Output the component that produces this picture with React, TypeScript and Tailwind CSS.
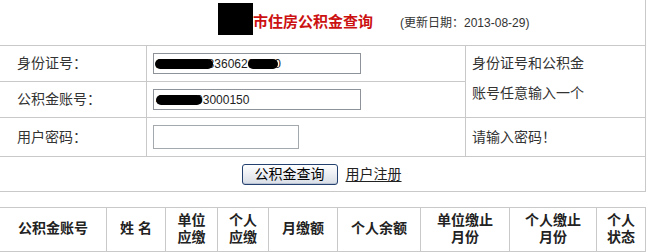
import React from "react";

const B = "border-[#c9c9c9]";

function Blob({ className }: { className: string }) {
  return <span className={`absolute bg-black rounded-full ${className}`} />;
}

export default function App() {
  const headers: { w: string; lines: string[] }[] = [
    { w: "w-[107px]", lines: ["公积金账号"] },
    { w: "w-[59px]", lines: ["姓\u00a0名"] },
    { w: "w-[52px]", lines: ["单位", "应缴"] },
    { w: "w-[51px]", lines: ["个人", "应缴"] },
    { w: "w-[69px]", lines: ["月缴额"] },
    { w: "w-[83px]", lines: ["个人余额"] },
    { w: "w-[89px]", lines: ["单位缴止", "月份"] },
    { w: "w-[87px]", lines: ["个人缴止", "月份"] },
    { w: "w-[49px]", lines: ["个人", "状态"] },
  ];
  return (
    <div className="w-[649px] h-[252px] overflow-hidden bg-white text-[#333] font-['Liberation_Sans','Noto_Sans_CJK_SC',sans-serif]">
      <div className={`w-[646px] border-r ${B}`}>
        <div className={`h-[46px] border-b ${B} flex items-start pl-[218px] pt-[3px]`}>
          <div className="w-[35px] h-[32px] bg-black" />
          <span className="mt-[9px] text-[15px] leading-[20px] font-bold text-[#cc1111]">市住房公积金查询</span>
          <span className="ml-[27px] mt-[11px] text-[12px] leading-[18px] text-[#333]">(更新日期：2013-08-29)</span>
        </div>
        <div className="grid grid-cols-[147px_319px_179px]">
          <div className={`h-[36px] border-b border-r ${B} flex items-center pl-[17px] text-[14px]`}>身份证号：</div>
          <div className={`h-[36px] border-b border-r ${B} flex items-center pl-[6px]`}>
            <div className="relative w-[208px] h-[21px] border border-[#8d9399] flex items-center pl-[2px] text-[12px] text-[#222] overflow-hidden whitespace-nowrap">
              1101011983606200010
              <Blob className="left-[1px] top-[5px] w-[58px] h-[10px]" />
              <Blob className="left-[94px] top-[5px] w-[30px] h-[10px]" />
            </div>
          </div>
          <div className={`row-span-2 border-b ${B} pl-[6px] pt-[2px] text-[14px] leading-[30px]`}>
            <div>身份证号和公积金</div>
            <div>账号任意输入一个</div>
          </div>
          <div className={`h-[36px] border-b border-r ${B} flex items-center pl-[17px] text-[14px]`}>公积金账号：</div>
          <div className={`h-[36px] border-b border-r ${B} flex items-center pl-[6px]`}>
            <div className="relative w-[208px] h-[21px] border border-[#8d9399] flex items-center pl-[2px] text-[12px] text-[#222] overflow-hidden whitespace-nowrap">
              43010203000150
              <Blob className="left-[2px] top-[5px] w-[46px] h-[10px]" />
            </div>
          </div>
          <div className={`h-[39px] border-b border-r ${B} flex items-center pl-[17px] text-[14px]`}>用户密码：</div>
          <div className={`h-[39px] border-b border-r ${B} flex items-center pl-[6px]`}>
            <div className="w-[146px] h-[24px] border border-[#a4a9ae]" />
          </div>
          <div className={`h-[39px] border-b ${B} flex items-center pl-[6px] text-[14px]`}>请输入密码！</div>
          <div className={`col-span-3 h-[35px] border-b ${B} flex items-center justify-center gap-[8px] pr-[2px]`}>
            <button className="w-[96px] h-[21px] rounded-[3px] border border-[#24406e] bg-linear-to-b from-white to-[#d8dde6] text-[14px] leading-none text-black shadow-[inset_0_-1px_0_#b9c3d3]">
              公积金查询
            </button>
            <span className="text-[14px] text-[#222] underline underline-offset-2">用户注册</span>
          </div>
        </div>
      </div>
      <div className="h-[15px]" />
      <div className={`w-[646px] h-[45px] border-y ${B} flex`}>
        {headers.map((h, i) => (
          <div
            key={i}
            className={`${h.w} h-full border-r ${B} flex flex-col items-center justify-center text-[14px] font-bold leading-[17px] text-[#222] pb-[2px]`}
          >
            {h.lines.map((l, j) => (
              <span key={j}>{l}</span>
            ))}
          </div>
        ))}
      </div>
    </div>
  );
}
